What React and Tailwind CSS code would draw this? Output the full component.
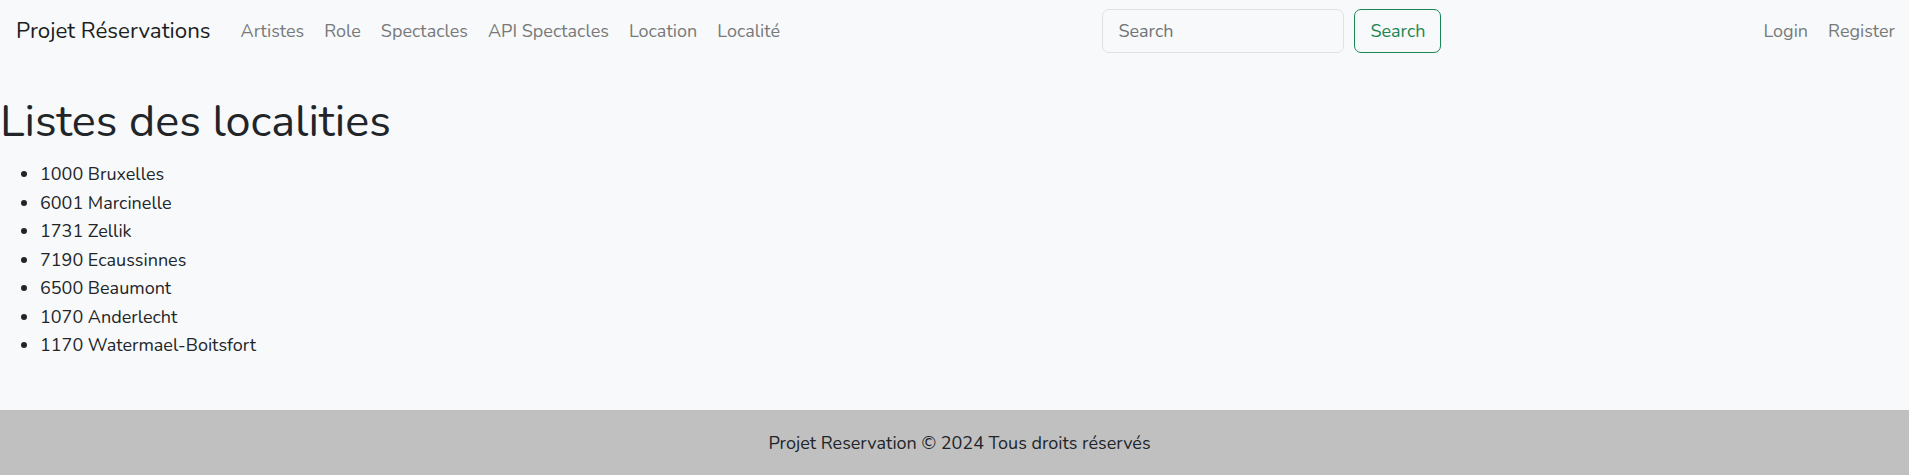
const links = ["Artistes", "Role", "Spectacles", "API Spectacles", "Location", "Localité"];

const localities = [
  "1000 Bruxelles",
  "6001 Marcinelle",
  "1731 Zellik",
  "7190 Ecaussinnes",
  "6500 Beaumont",
  "1070 Anderlecht",
  "1170 Watermael-Boitsfort",
];

export default function App() {
  return (
    <div className="min-h-screen bg-[#f8f9fa] text-[#212529] font-['Nunito','Lato',sans-serif]">
      {/* Navbar */}
      <nav className="flex items-center h-[62px] pl-[16px] pr-[14px]">
        <div className="flex items-center flex-1">
          <span className="text-[22.3px] text-[#1b1d20] mr-[20px] leading-none">Projet Réservations</span>
          <ul className="flex items-center">
            {links.map((l) => (
              <li key={l}>
                <a href="#" className="block px-[10px] text-[18px] text-[#77797b]">
                  {l}
                </a>
              </li>
            ))}
          </ul>
        </div>

        <form className="flex items-center gap-[10px]" onSubmit={(e) => e.preventDefault()}>
          <input
            type="text"
            placeholder="Search"
            className="w-[242px] h-[44px] px-[15px] text-[18px] bg-[#f8f9fa] border border-[#dee2e6] rounded-[7px] placeholder:text-[#707479] outline-none"
          />
          <button className="w-[87px] h-[44px] text-[18px] text-[#198754] border border-[#198754] rounded-[7px]">
            Search
          </button>
        </form>

        <ul className="flex items-center ml-[312px]">
          <li>
            <a href="#" className="block px-[10px] text-[18px] text-[#77797b]">Login</a>
          </li>
          <li>
            <a href="#" className="block pl-[10px] text-[18px] text-[#77797b]">Register</a>
          </li>
        </ul>
      </nav>

      {/* Content */}
      <main className="pt-[31px] pb-[31px]">
        <h1 className="text-[45px] leading-[57px] mb-[10px]">Listes des localities</h1>
        <ul className="list-disc pl-[40px] text-[18px] leading-[28.5px] mb-[19px]">
          {localities.map((loc) => (
            <li key={loc}>{loc}</li>
          ))}
        </ul>
      </main>

      {/* Footer */}
      <footer className="bg-[#c0c0c0] py-[19px] pl-[10px] text-center text-[18px] leading-[28.5px]">
        Projet Reservation © 2024 Tous droits réservés
      </footer>
    </div>
  );
}
